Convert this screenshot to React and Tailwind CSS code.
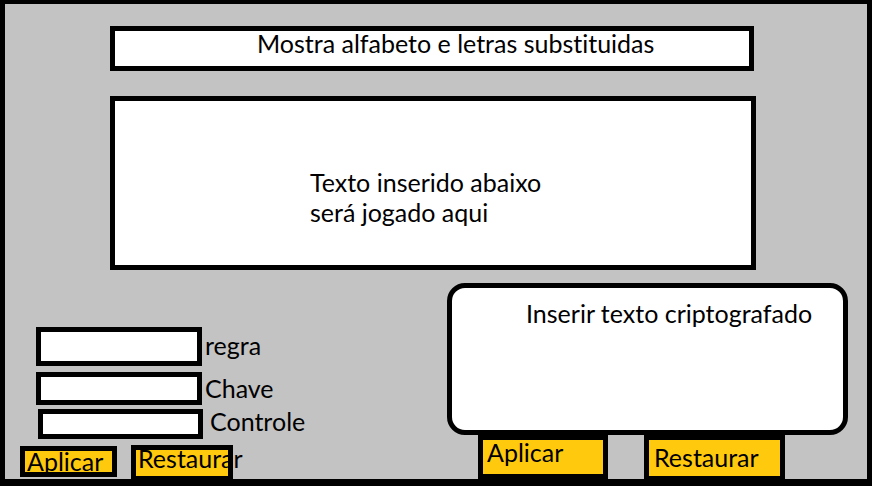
export default function App() {
  return (
    <div className="w-[872px] h-[486px] bg-[#c3c3c3] border-black border-t-4 border-b-[7px] border-x-[5px] font-['Lato',sans-serif] text-black text-[25px] leading-none overflow-hidden [font-variant-ligatures:none]">
      <div className="mt-[22px] ml-[105px] w-[644px] h-[45px] border-[5px] border-black bg-white pl-[142px] whitespace-nowrap">
        Mostra alfabeto e letras substituidas
      </div>
      <div className="mt-[25px] ml-[105px] w-[646px] h-[174px] border-[5px] border-black bg-white pl-[195px] pt-[66px] leading-[30px] whitespace-nowrap">
        <div>Texto inserido abaixo</div>
        <div>será jogado aqui</div>
      </div>
      <div className="flex">
        <div className="w-[442px] flex flex-col">
          <div className="mt-[57px] flex items-start">
            <div className="ml-[31px] w-[166px] h-[39px] border-[5px] border-black bg-white" />
            <span className="ml-[3px] mt-[6px]">regra</span>
          </div>
          <div className="mt-[6px] flex items-start">
            <div className="ml-[31px] w-[166px] h-[33px] border-[5px] border-black bg-white" />
            <span className="ml-[3px] mt-[4px]">Chave</span>
          </div>
          <div className="mt-[4px] flex items-start">
            <div className="ml-[33px] w-[165px] h-[30px] border-[5px] border-black bg-white" />
            <span className="ml-[7px]">Controle</span>
          </div>
          <div className="mt-[7px] flex items-start">
            <div className="ml-[15px] w-[97px] h-[31px] border-[5px] border-black bg-[#ffc90e] overflow-hidden pl-[2px] whitespace-nowrap">
              <div className="-mt-[2px]">Aplicar</div>
            </div>
            <div className="relative ml-[14px] -mt-[1px] w-[102px] h-[36px] bg-[#ffc90e] pl-[7px] pt-[1px] whitespace-nowrap">
              Restaurar
              <div className="absolute inset-0 border-[5px] border-black pointer-events-none" />
            </div>
          </div>
        </div>
        <div className="flex flex-col">
          <div className="mt-[13px] w-[401px] h-[152px] border-[5px] border-black rounded-[18px] bg-white pl-[74px] pt-[13px] whitespace-nowrap">
            Inserir texto criptografado
          </div>
          <div className="flex items-start">
            <div className="ml-[31px] w-[130px] h-[44px] border-[5px] border-black bg-[#ffc90e] pl-[4px] whitespace-nowrap">
              Aplicar
            </div>
            <div className="ml-[36px] w-[141px] h-[46px] border-[5px] border-black bg-[#ffc90e] pl-[5px] pt-[5px] whitespace-nowrap">
              Restaurar
            </div>
          </div>
        </div>
      </div>
    </div>
  );
}
